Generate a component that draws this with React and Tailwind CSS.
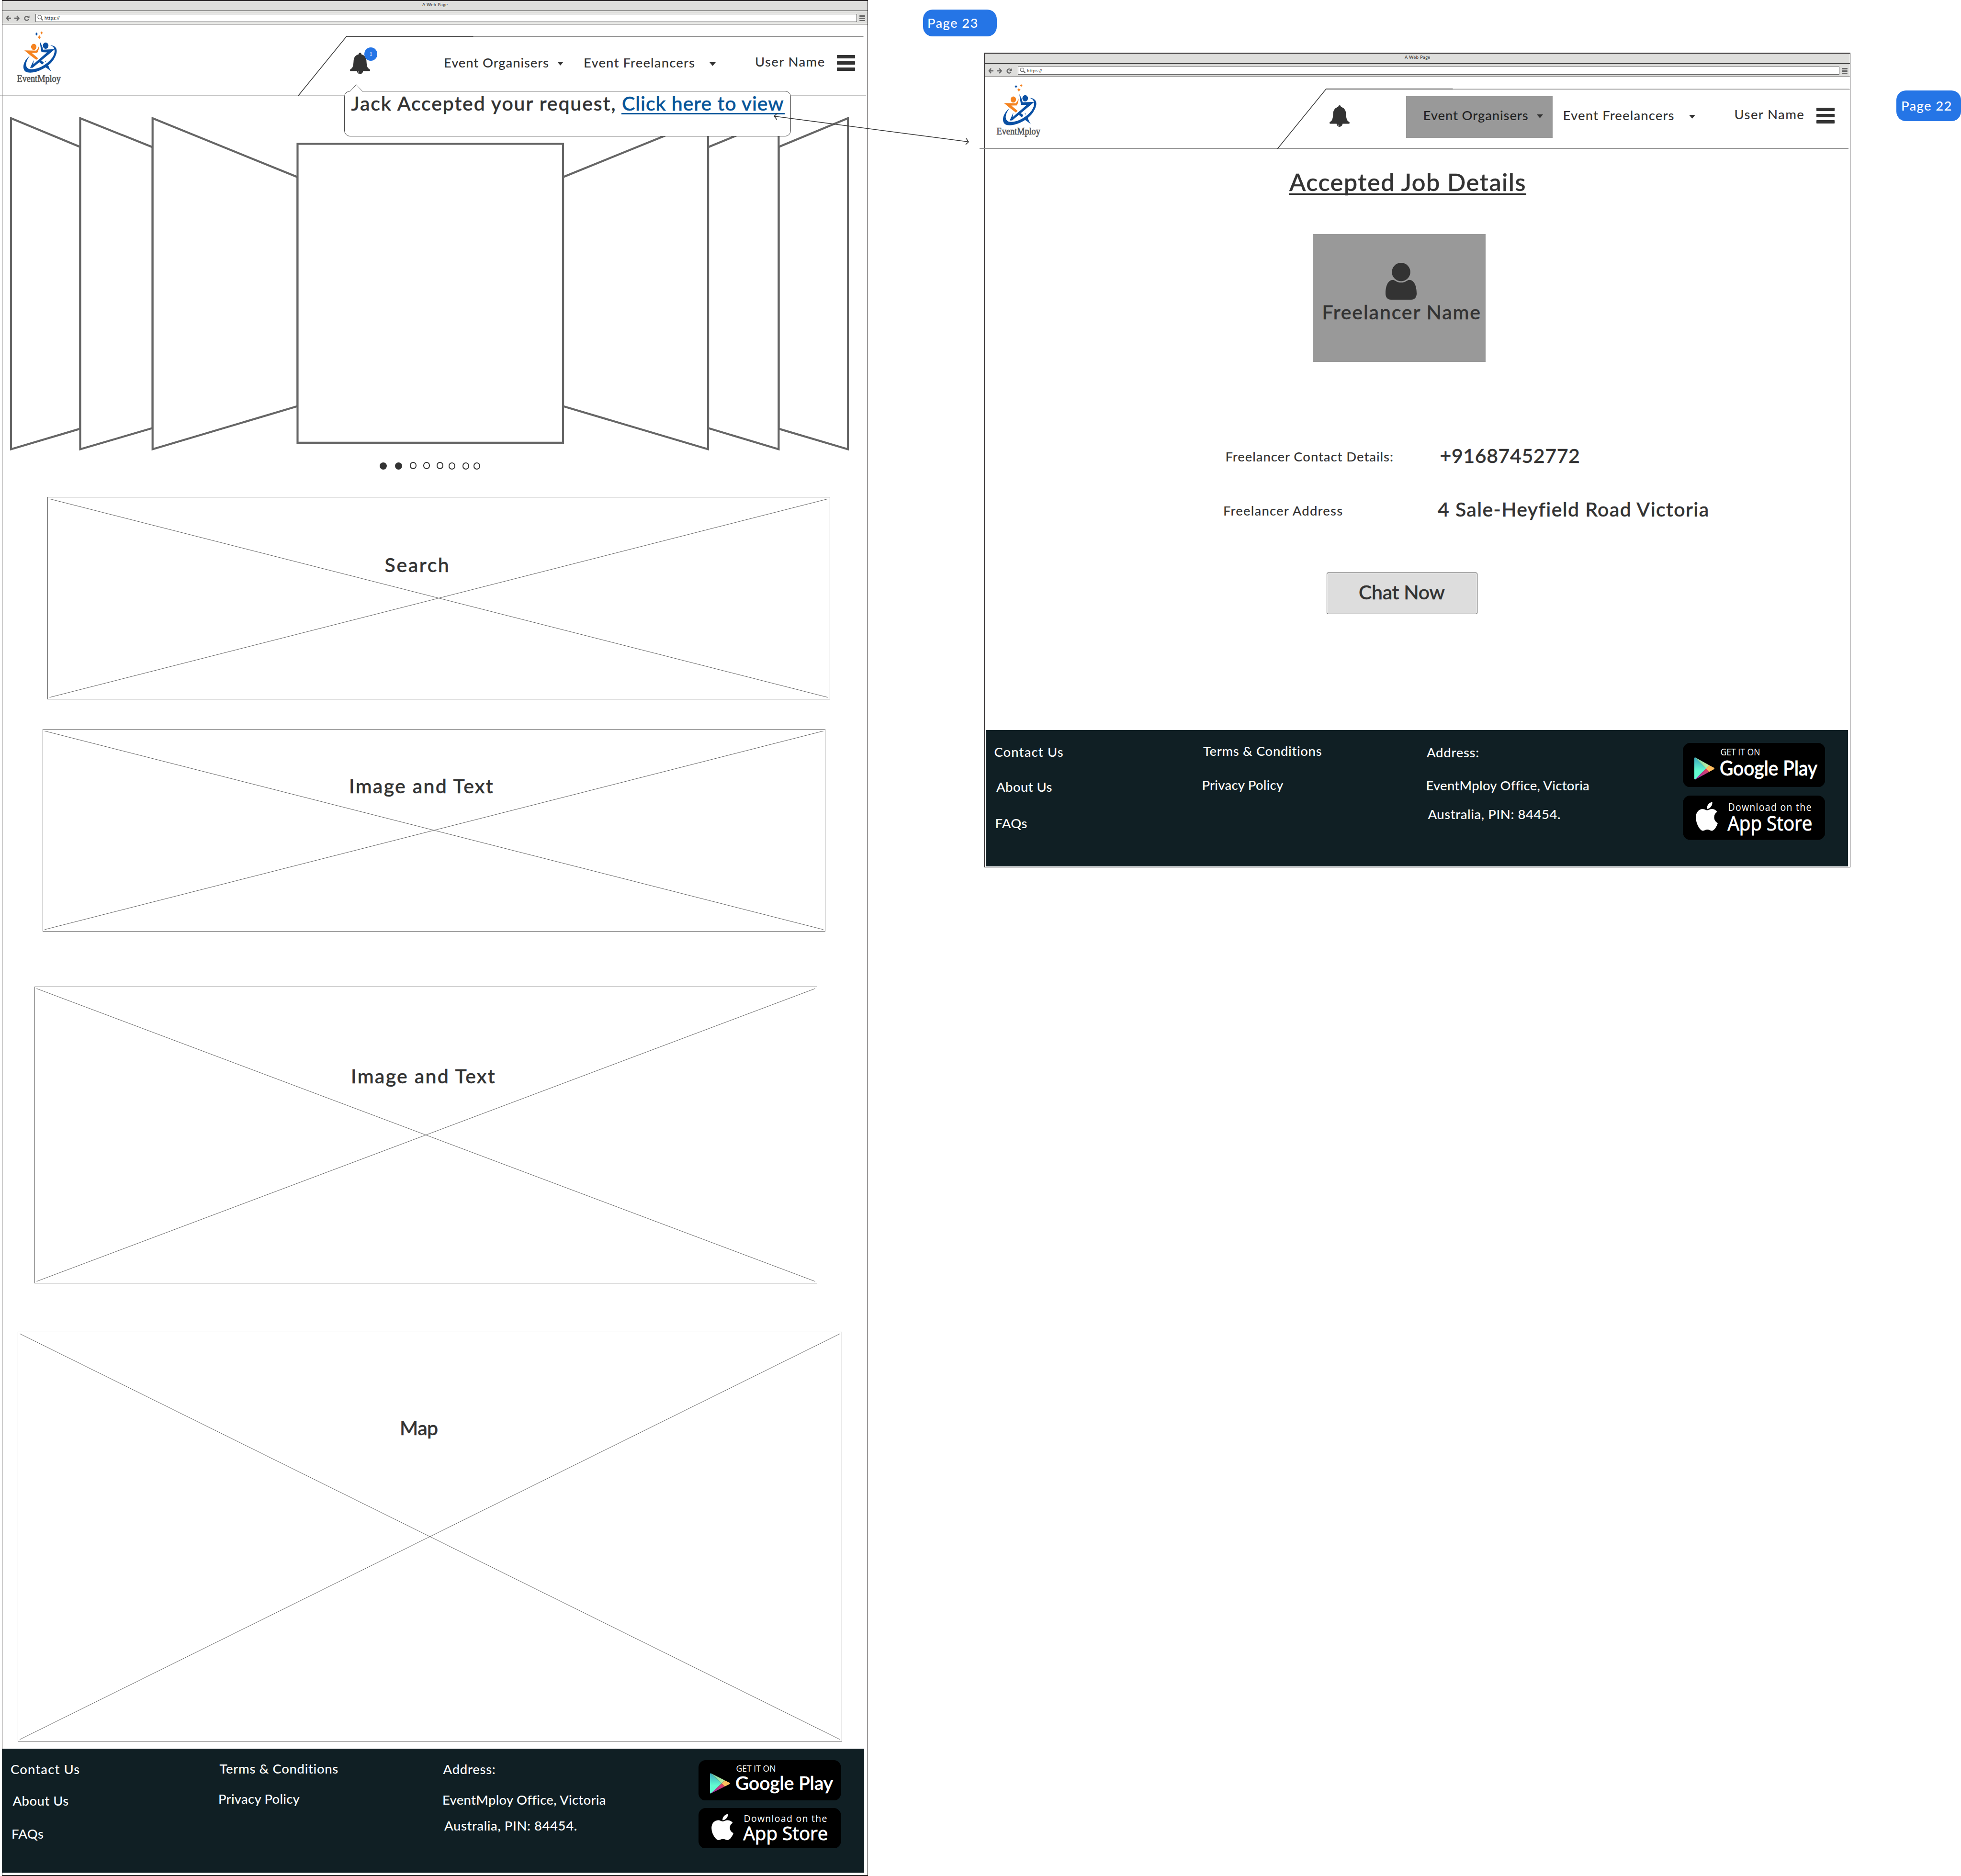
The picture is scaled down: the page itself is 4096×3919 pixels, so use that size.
import React, { useLayoutEffect, useRef, useState } from "react";
import { FaApple } from "react-icons/fa";

const SIZES = {
  xs: "text-[9px] ",
  sm: "h-[32px] text-[27.500px] leading-[35px] ",
  lg: "h-[48px] text-[41px] leading-[52px] [-webkit-text-stroke:0.5px] ",
  xl: "h-[56px] text-[50.500px] leading-[64px] [-webkit-text-stroke:0.5px] ",
};

// One line of text whose letter spacing is set so that it fills its box.
function Line({ size = "sm", className = "", children }) {
  const box = useRef(null);
  const run = useRef(null);
  const [spacing, setSpacing] = useState(0);
  useLayoutEffect(() => {
    const room = box.current.clientWidth + 2;
    const natural = run.current.offsetWidth;
    setSpacing((room - natural) / Math.max(1, String(children).length - 1));
  }, [children]);
  return (
    <div ref={box} className={"shrink-0 whitespace-nowrap " + SIZES[size] + className}>
      <span ref={run} className="-ml-px inline-block" style={{ letterSpacing: spacing }}>
        {children}
      </span>
    </div>
  );
}

function Logo() {
  const star = (x, y, w, h) =>
    `M${x} ${y - h}Q${x + w * 0.25} ${y - h * 0.25} ${x + w} ${y}Q${x + w * 0.25} ${y + h * 0.25} ${x} ${y + h}Q${x - w * 0.25} ${y + h * 0.25} ${x - w} ${y}Q${x - w * 0.25} ${y - h * 0.25} ${x} ${y - h}z`;
  return (
    <svg viewBox="150 95 395 480" className="mt-[13px] h-[112.300px] w-[92.400px] shrink-0 overflow-visible">
      <g fill="#0a50a4">
        <path d={star(326, 125, 13, 15)} />
        <ellipse cx="408" cy="229" rx="25" ry="28" />
        <path d="M356 192Q379 232 385 265L490 261L292 426L269 427L302 358L297 396L420 289L371 287Q361 240 356 192z" />
        <path d="M360 355L391 379Q388 392 376 397L343 371z" />
        <path d="M403 368L413 362L410 376z" />
        <path d="M405 421L430 402Q440 432 458 461Q440 444 405 421z" />
        <path d="M266 318C208 366 194 432 228 460C284 492 412 440 470 366C526 290 520 226 445 225C496 236 500 286 466 338C412 410 318 450 262 438C222 422 226 376 266 318z" />
      </g>
      <g fill="#f58320">
        <path d={star(372, 115, 12, 15)} />
        <path d={star(352, 154, 15, 18)} />
        <ellipse cx="302" cy="240" rx="24" ry="27" />
        <path d="M218 271L324 273Q340 258 349 231Q349 268 333 293L284 294L341 342L324 356L275 318z" />
      </g>
      <text
        x="152"
        y="552"
        textLength="391"
        lengthAdjust="spacingAndGlyphs"
        fill="#555"
        stroke="#555"
        strokeWidth="3"
        fontSize="92"
        className="font-['Liberation_Serif',serif]"
      >
        EventMploy
      </text>
    </svg>
  );
}

function Bell({ count }) {
  return (
    <div className="relative mt-[59px] ml-[603.600px] h-[45px] w-[42px] shrink-0">
      <svg viewBox="0 0 60 64" className="h-[45px] w-[42px]">
        <path
          fill="#333"
          d="M30 0c2.500 0 4 1.800 4 5 8 1.500 14 8 15 17 .8 12 1 18 5 24 3 3 6 3.500 6 6 0 2-1 3-3 3H3c-2 0-3-1-3-3 0-2.500 3-3 6-6 4-6 4.200-12 5-24 1-9 7-15.500 15-17 0-3.200 1.500-5 4-5z"
        />
        <path fill="#333" d="M21 54a9 10 0 0 0 18 0z" />
        <path fill="none" stroke="#fff" strokeWidth="1.200" d="M25 56q.5 4.500 4.500 5.500" />
      </svg>
      {count && (
        <div className="absolute -top-[11px] left-[30px] flex size-[27.500px] items-center justify-center rounded-full bg-[#2575e6] text-[10px] text-white">
          {count}
        </div>
      )}
    </div>
  );
}

function Caret({ className }) {
  return (
    <svg viewBox="0 0 13 8" className={"h-[8px] w-[13px] shrink-0 " + className}>
      <path fill="currentColor" d="M0 0H13L6.500 7.800z" />
    </svg>
  );
}

function BrowserBars() {
  return (
    <>
      <div className="flex h-[21px] justify-center border-b border-[#333] bg-[#dededc] leading-[16px]">
        <Line size="xs" className="w-[51px]">A Web Page</Line>
      </div>
      <div className="flex h-[28px] border-b border-[#231f20] bg-[#dededc] pt-[5.500px] pl-[7px] text-[#666]">
        <svg viewBox="0 0 50 12" className="mt-[3px] h-[12px] w-[50px] shrink-0">
          <g fill="none" stroke="currentColor" strokeWidth="2.600">
            <path d="M6 1L2 6L6 11M2 6H11" />
            <path d="M23 1L27.500 6L23 11M27.500 6H18" />
            <path strokeWidth="2.200" d="M46.800 3.200A4.300 4.300 0 1 0 47.800 8" />
          </g>
          <path fill="currentColor" d="M49.500 .5V6H44z" />
        </svg>
        <div className="ml-[12px] flex h-[17px] w-[1716px] shrink-0 items-center border border-[#666] bg-white pl-[3px]">
          <svg viewBox="0 0 12 12" className="size-[12px] shrink-0">
            <g fill="none" stroke="currentColor">
              <circle cx="4.800" cy="4.800" r="3.800" strokeWidth="1.200" />
              <path d="M7.500 7.500L11.300 11.300" strokeWidth="2" />
            </g>
          </svg>
          <Line size="xs" className="ml-[4px] w-[30px] leading-[15px] text-[#333]">https://</Line>
        </div>
        <div className="mt-[3.500px] ml-[5px] flex w-[11.500px] flex-col gap-[2px]">
          <div className="h-[2.800px] rounded-[1px] bg-[#666]" />
          <div className="h-[2.800px] rounded-[1px] bg-[#666]" />
          <div className="h-[2.800px] rounded-[1px] bg-[#666]" />
        </div>
      </div>
    </>
  );
}

function Header({ count, highlight, shift, topEnd, bottomEnd }) {
  return (
    <header className={"relative h-[150px] w-[1818px] shrink-0 " + shift}>
      <svg viewBox="0 51 1818 150" className="absolute inset-0 h-[150px] w-[1818px]">
        <path d={`M724 76.200H${topEnd}M0 200.200H${bottomEnd}`} stroke="#8c8c8c" strokeWidth="1.500" />
        <path d="M622.300 200.800L724 75.700H988.500" fill="none" stroke="#333" strokeWidth="1.500" />
      </svg>
      <nav className="relative flex items-start pl-[35px]">
        <Logo />
        <Bell count={count} />
        <div className="relative mt-[62.200px] ml-[155px] flex">
          {highlight && <div className="absolute -top-[22.100px] -left-[36.800px] h-[87px] w-[306px] bg-[#999]" />}
          <Line className={highlight ? "relative w-[217px] text-[#222]" : "relative w-[217px]"}>Event Organisers</Line>
          <Caret className="relative mt-[16px] ml-[19px]" />
        </div>
        <Line className="mt-[62.200px] ml-[43px] w-[229.500px]">Event Freelancers</Line>
        <Caret className="mt-[79px] ml-[32.500px]" />
        <Line className="mt-[60.400px] ml-[83px] w-[142.600px]">User Name</Line>
        <div className="mt-[64px] ml-[27.400px] flex w-[38.500px] shrink-0 flex-col gap-[6.500px]">
          <div className="h-[6.500px] rounded-[1px] bg-[#333]" />
          <div className="h-[6.500px] rounded-[1px] bg-[#333]" />
          <div className="h-[6.500px] rounded-[1px] bg-[#333]" />
        </div>
      </nav>
    </header>
  );
}

function Carousel() {
  return (
    <svg viewBox="5 201 1807 752" className="h-[752px] w-[1807px] shrink-0">
      <g fill="#fff" stroke="#666" strokeWidth="4.200">
        <path d="M23 247L167.500 307V895.600L23 938.500z" />
        <path d="M167.500 247L318.700 307.500V894.200L167.500 938.500z" />
        <path d="M318.700 247L621.500 370V848.500L318.700 938.500z" />
        <path d="M1771 247L1626.400 307V895.600L1771 938.500z" />
        <path d="M1626.400 247L1479 307.500V894.200L1626.400 938.500z" />
        <path d="M1479 247L1176 370V848.500L1479 938.500z" />
        <path d="M621.500 300.500H1176V924.800H621.500z" />
      </g>
    </svg>
  );
}

function Dots() {
  return (
    <div className="mt-[12px] flex h-[16px] shrink-0 items-start pl-[788.400px]">
      <div className="mt-[1.300px] size-[14.500px] rounded-full bg-[#333]" />
      <div className="mt-[1.300px] ml-[17.400px] size-[14.500px] rounded-full bg-[#333]" />
      <div className="ml-[15.800px] size-[14.500px] rounded-full border-2 border-[#333]" />
      <div className="ml-[13.900px] size-[14.500px] rounded-full border-2 border-[#333]" />
      <div className="ml-[13.500px] size-[14.500px] rounded-full border-2 border-[#333]" />
      <div className="mt-[1.300px] ml-[10.500px] size-[14.500px] rounded-full border-2 border-[#333]" />
      <div className="mt-[1.300px] ml-[14.500px] size-[14.500px] rounded-full border-2 border-[#333]" />
      <div className="mt-[1.300px] ml-[8.500px] size-[14.500px] rounded-full border-2 border-[#333]" />
    </div>
  );
}

function Placeholder({ box, label, children }) {
  return (
    <section className={"relative shrink-0 border border-[#606060] " + box}>
      <svg viewBox="0 0 100 100" preserveAspectRatio="none" className="absolute inset-[3px] h-[calc(100%-6px)] w-[calc(100%-6px)]">
        <path d="M0 0L100 100M100 0L0 100" stroke="#606060" strokeWidth="1" vectorEffect="non-scaling-stroke" />
      </svg>
      <Line size="lg" className={"relative " + label}>{children}</Line>
    </section>
  );
}

function GooglePlay({ size, id }) {
  return (
    <svg viewBox="0 0 297.500 84.300" preserveAspectRatio="none" className={size}>
      <defs>
        <linearGradient id={id + "a"} x1="0" y1="0" x2="0" y2="1">
          <stop offset="0" stopColor="#3ba6bd" />
          <stop offset=".6" stopColor="#62fbd0" />
          <stop offset="1" stopColor="#62fbd0" />
        </linearGradient>
        <linearGradient id={id + "b"} x1="0" y1="0" x2="1" y2="0">
          <stop offset="0" stopColor="#6ccfb0" />
          <stop offset="1" stopColor="#c6f5a0" />
        </linearGradient>
        <linearGradient id={id + "c"} x1="0" y1="1" x2="1" y2="0">
          <stop offset="0" stopColor="#9230b4" />
          <stop offset="1" stopColor="#e8425a" />
        </linearGradient>
      </defs>
      <rect width="297.500" height="84.300" rx="15" fill="#000" />
      <path d="M24 29Q24 28 25.500 27.300L48.500 48.500L25.500 69.800Q24 69 24 68z" fill={`url(#${id}a)`} />
      <path d="M25.500 27.300L55 42.300L48.500 48.500z" fill={`url(#${id}b)`} />
      <path d="M25.500 69.800L55 55L48.500 48.500z" fill={`url(#${id}c)`} />
      <path d="M55 42.300L64.500 47Q67.500 48.700 64.500 50.200L55 55L48.500 48.500z" fill="#ffbd5e" />
      <g fill="#fff">
        <text x="78.500" y="24" fontSize="17.500" textLength="83" lengthAdjust="spacingAndGlyphs" className="font-['Open_Sans',sans-serif] font-normal">
          GET IT ON
        </text>
        <text x="77" y="61.700" fontSize="39" textLength="204" lengthAdjust="spacingAndGlyphs" stroke="#fff" strokeWidth=".7" className="font-['Lato',sans-serif]">
          Google Play
        </text>
      </g>
    </svg>
  );
}

function AppStore({ size }) {
  return (
    <svg viewBox="0 0 297.500 84.300" preserveAspectRatio="none" className={size}>
      <rect width="297.500" height="84.300" rx="15" fill="#000" />
      <FaApple x="18.900" y="8.500" size="62.300" color="#fff" />
      <g fill="#fff" className="font-['Open_Sans',sans-serif]">
        <text x="94.500" y="28.800" fontSize="19.500" textLength="174">Download on the</text>
        <text x="93.500" y="66.700" fontSize="39" textLength="177" lengthAdjust="spacingAndGlyphs" stroke="#fff" strokeWidth=".9">
          App Store
        </text>
      </g>
    </svg>
  );
}

const HOME_FOOTER = {
  box: "mt-[15.400px] h-[259px] w-[1800px]",
  contact: "mt-[24.400px]",
  about: "mt-[34px]",
  faqs: "mt-[37px]",
  terms: "mt-[23.400px]",
  privacy: "mt-[31px]",
  address: "mt-[24.800px]",
  office: "mt-[31.400px]",
  city: "mt-[22.700px]",
  stores: "mt-[23.600px] gap-[15.600px]",
  badge: "h-[84.300px] w-[297.500px]",
};

const DETAILS_FOOTER = {
  box: "mt-[242px] ml-[2.400px] h-[285px] w-[1800.600px]",
  contact: "mt-[28px]",
  about: "mt-[40.500px]",
  faqs: "mt-[43.800px]",
  terms: "mt-[26px]",
  privacy: "mt-[38.500px]",
  address: "mt-[28.300px]",
  office: "mt-[37.400px]",
  city: "mt-[28.300px]",
  stores: "mt-[26.400px] ml-[1.500px] gap-[17.600px]",
  badge: "h-[92.600px] w-[297.500px]",
};

function Footer({ s, id }) {
  return (
    <footer className={"flex shrink-0 bg-[#101f24] text-white " + s.box}>
      <div className="w-[452px] shrink-0 pl-[18px]">
        <Line className={"w-[142px] " + s.contact}>Contact Us</Line>
        <Line className={"ml-[4.500px] w-[115px] " + s.about}>About Us</Line>
        <Line className={"ml-[2px] w-[65px] " + s.faqs}>FAQs</Line>
      </div>
      <div className="w-[468px] shrink-0">
        <Line className={"ml-[2.500px] w-[245.500px] " + s.terms}>Terms &amp; Conditions</Line>
        <Line className={"w-[168px] " + s.privacy}>Privacy Policy</Line>
      </div>
      <div className="w-[534px] shrink-0">
        <Line className={"ml-[1.500px] w-[107px] " + s.address}>Address:</Line>
        <Line className={"w-[338px] " + s.office}>EventMploy Office, Victoria</Line>
        <Line className={"ml-[4px] w-[275px] " + s.city}>Australia, PIN: 84454.</Line>
      </div>
      <div className={"flex flex-col " + s.stores}>
        <GooglePlay size={s.badge} id={id} />
        <AppStore size={s.badge} />
      </div>
    </footer>
  );
}

function HomePage() {
  return (
    <article className="absolute top-0 left-[4px] flex h-[3919px] w-[1809px] flex-col border border-t-2 border-b-2 border-[#2b2829] bg-white">
      <BrowserBars />
      <Header count="1" shift="-ml-[5px]" topEnd={1803.5} bottomEnd={1809} />
      <Carousel />
      <Dots />
      <Placeholder box="mt-[57px] ml-[94px] h-[423px] w-[1635px]" label="mt-[115px] ml-[704.600px] w-[132px]">
        Search
      </Placeholder>
      <Placeholder box="mt-[62px] ml-[84px] h-[423px] w-[1635px]" label="mt-[91.600px] ml-[640px] w-[299px]">
        Image and Text
      </Placeholder>
      <Placeholder box="mt-[115px] ml-[67px] h-[620px] w-[1635px]" label="mt-[160px] ml-[661px] w-[299px]">
        Image and Text
      </Placeholder>
      <Placeholder box="mt-[101px] ml-[32px] h-[856px] w-[1722px]" label="mt-[174px] ml-[798px] w-[78px]">
        Map
      </Placeholder>
      <Footer s={HOME_FOOTER} id="home" />
    </article>
  );
}

function DetailsPage() {
  return (
    <article className="absolute top-[110px] left-[2056px] flex h-[1702px] w-[1809px] flex-col border border-t-2 border-[#2b2829] bg-white">
      <BrowserBars />
      <Header highlight shift="-ml-[11.400px]" topEnd={1818} bottomEnd={1815} />
      <h1 className="mt-[37px] ml-[635px] h-[59px] w-[496px] shrink-0 border-b-[3px] border-[#333] pl-[2px]">
        <Line size="xl" className="w-[491px]">Accepted Job Details</Line>
      </h1>
      <div className="mt-[82px] ml-[685.400px] h-[267.300px] w-[360.600px] shrink-0 bg-[#999] pt-[60px]">
        <svg viewBox="0 0 91 108" preserveAspectRatio="none" className="ml-[151.600px] h-[77px] w-[65px]">
          <g fill="#333">
            <ellipse cx="45.500" cy="27" rx="27" ry="27" />
            <path d="M22 50C28 50 32 58 45.500 58C59 58 63 50 69 50C84 50 91 68 91 90C91 101 85 108 75 108H16C6 108 0 101 0 90C0 68 7 50 22 50z" />
          </g>
        </svg>
        <Line size="lg" className="ml-[20px] w-[329px]">Freelancer Name</Line>
      </div>
      <div className="mt-[169.700px] ml-[503.500px] flex h-[48px] shrink-0">
        <Line className="mt-[10px] w-[348px]">Freelancer Contact Details:</Line>
        <Line size="lg" className="ml-[100px] w-[290.400px]">+91687452772</Line>
      </div>
      <div className="mt-[64.500px] ml-[499px] flex h-[48px] shrink-0">
        <Line className="mt-[10.500px] w-[247px]">Freelancer Address</Line>
        <Line size="lg" className="ml-[201px] w-[563.600px]">4 Sale-Heyfield Road Victoria</Line>
      </div>
      <button className="mt-[110px] ml-[714px] flex h-[87px] w-[315px] shrink-0 items-start rounded-[3px] border border-[#444] bg-[#ddd] pt-[14px] pl-[67px]">
        <Line size="lg" className="w-[178px] text-left">Chat Now</Line>
      </button>
      <Footer s={DETAILS_FOOTER} id="details" />
    </article>
  );
}

function Notification() {
  return (
    <div className="absolute top-[190px] left-[719px] flex h-[95px] w-[933px] rounded-[12px] border border-[#444] bg-white pl-[14.500px]">
      <svg viewBox="0 0 28 16" className="absolute -top-[15px] left-[10px] h-[16px] w-[28px]">
        <path d="M.5 15.200L14 .8L27.500 15.200V16H.5z" fill="#fff" />
        <path d="M.5 15.200L14 .8L27.500 15.200" fill="none" stroke="#444" strokeWidth=".9" />
      </svg>
      <Line size="lg" className="-mt-[.6px] w-[550px]">Jack Accepted your request,</Line>
      <div className="-mt-[.6px] ml-[13px] h-[48.600px] w-[341.500px] border-b-[3px] border-[#07559a] pl-[2.500px] text-[#07559a]">
        <Line size="lg" className="w-[336px]">Click here to view</Line>
      </div>
    </div>
  );
}

export default function App() {
  return (
    <main className="relative h-[3919px] w-[4096px] overflow-hidden bg-white font-['Lato',sans-serif] font-medium text-[#333]">
      <HomePage />
      <DetailsPage />
      <Notification />
      <svg viewBox="1610 230 420 80" className="absolute top-[230px] left-[1610px] h-[80px] w-[420px]">
        <path
          d="M1617 242.700L2023 296.300M1624 236.500L1617 242.700L1622.700 250M2018 289L2023 296.300L2017 301.800"
          fill="none"
          stroke="#333"
          strokeWidth="1.600"
        />
      </svg>
      <div className="absolute top-[20px] left-[1928px] h-[55.500px] w-[153.500px] rounded-[20px] bg-[#2575e6] pt-[10px] pl-[10px] text-white">
        <Line className="w-[103px]">Page 23</Line>
      </div>
      <div className="absolute top-[189.400px] left-[3961px] h-[63.800px] w-[135px] rounded-[20px] bg-[#2575e6] pt-[14px] pl-[11px] text-white">
        <Line className="w-[103px]">Page 22</Line>
      </div>
    </main>
  );
}
